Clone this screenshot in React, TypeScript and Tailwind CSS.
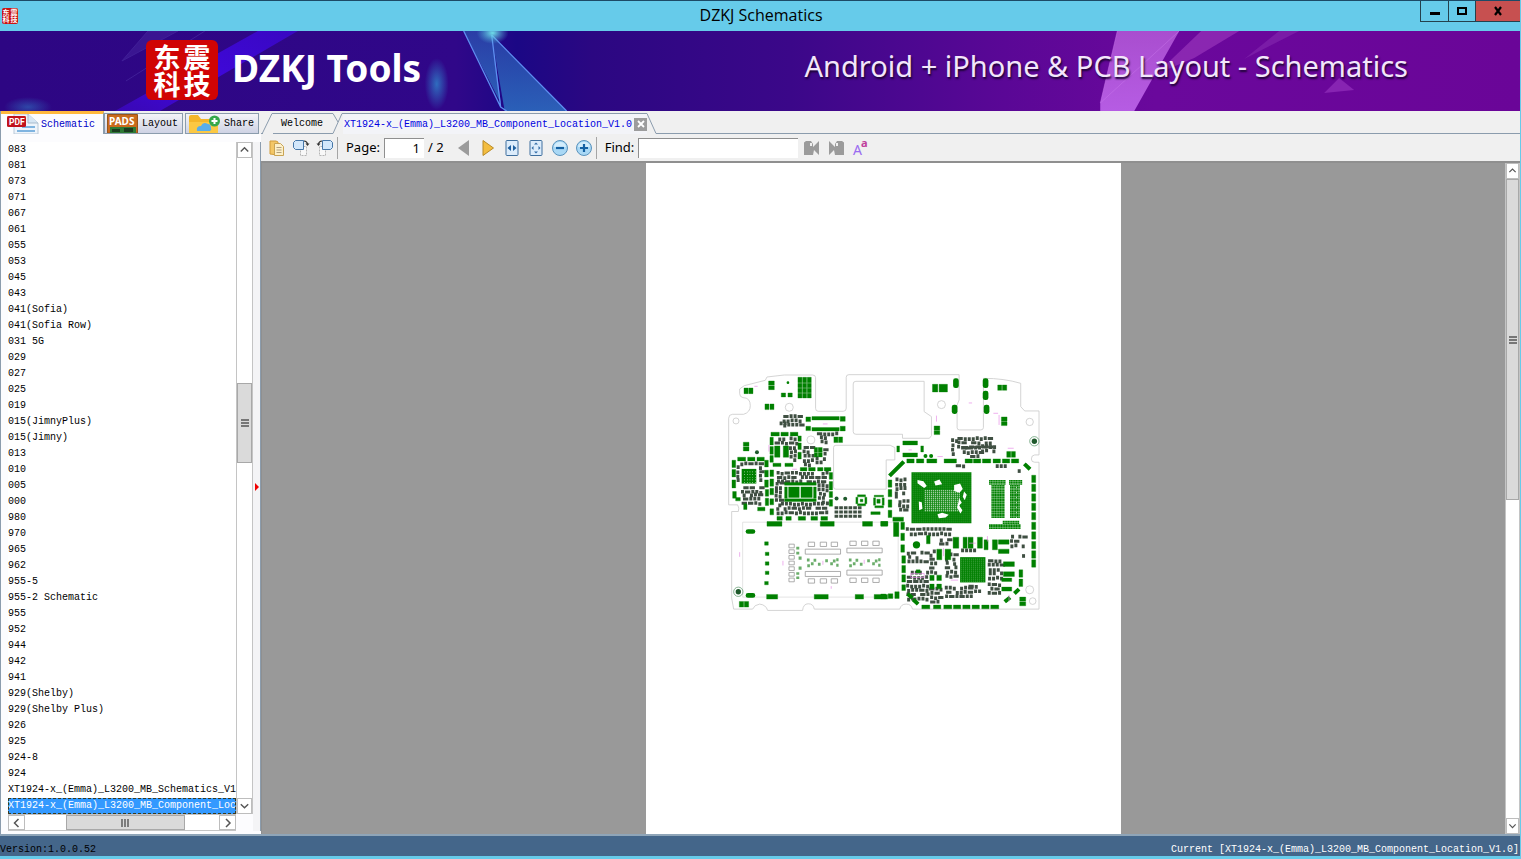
import { useState } from 'react';

type Orientation = 'vertical' | 'horizontal';
type Box = [number, number, number, number];

interface ScrollbarProps {
  orientation: Orientation;
  before: number;
  thumb: number;
  after: number;
  className?: string;
}

const files = [
  '083', '081', '073', '071', '067', '061', '055', '053', '045', '043',
  '041(Sofia)', '041(Sofia Row)', '031 5G', '029', '027', '025', '019',
  '015(JimnyPlus)', '015(Jimny)', '013', '010', '005', '000', '980', '970',
  '965', '962', '955-5', '955-2 Schematic', '955', '952', '944', '942', '941',
  '929(Shelby)', '929(Shelby Plus)', '926', '925', '924-8', '924',
  'XT1924-x_(Emma)_L3200_MB_Schematics_V1.0',
  'XT1924-x_(Emma)_L3200_MB_Component_Location_V1.0',
];

const chevrons = {
  up: 'M3 8.5 7 4.5l4 4',
  down: 'M3 5 7 9l4-4',
  left: 'M8.5 3 4.5 7l4 4',
  right: 'M5 3l4 4-4 4',
};

const Chevron = ({ dir }: { dir: keyof typeof chevrons }) => (
  <svg className="h-[14px] w-[14px]" viewBox="0 0 14 14" fill="none" stroke="#555" strokeWidth="1.5">
    <path d={chevrons[dir]} />
  </svg>
);

function Scrollbar({ orientation, before, thumb, after, className = '' }: ScrollbarProps) {
  const vertical = orientation === 'vertical';
  const button = 'flex shrink-0 items-center justify-center border border-[#bdbdbd] bg-white';
  const size = vertical ? 'h-4 w-full' : 'h-full w-[17px]';
  return (
    <div className={`flex ${vertical ? 'flex-col border-x' : 'border-y'} border-[#c4c4c4] bg-white ${className}`}>
      <button type="button" aria-label={vertical ? 'Scroll up' : 'Scroll left'} className={`${button} ${size}`}>
        <Chevron dir={vertical ? 'up' : 'left'} />
      </button>
      <div style={{ flex: `${before} 0 0px` }} />
      <div
        className="flex items-center justify-center border border-[#a8a8a8] bg-[#dadada]"
        style={{ flex: `${thumb} 0 0px` }}
      >
        <svg className={`h-2 w-2 ${vertical ? '' : 'rotate-90'}`} viewBox="0 0 8 8" stroke="#555" strokeWidth="1.4">
          <path d="M0 1h8M0 4h8M0 7h8" />
        </svg>
      </div>
      <div style={{ flex: `${after} 0 0px` }} />
      <button type="button" aria-label={vertical ? 'Scroll down' : 'Scroll right'} className={`${button} ${size}`}>
        <Chevron dir={vertical ? 'down' : 'right'} />
      </button>
    </div>
  );
}

// ---- board drawing ----

const boxPath = (boxes: Box[]) => boxes.map(([x, y, w, h]) => `M${x} ${y}h${w}v${h}h${-w}z`).join('');

// small passives packed into an area, some of them left out or turned
const cluster = ([x, y, w, h]: Box, seed: number) => {
  let s = seed * 7919 + 13;
  const rand = () => {
    s = (s * 1103515245 + 12345) % 2147483648;
    return s / 2147483648;
  };
  const out: Box[] = [];
  for (let cy = y; cy < y + h - 6; cy += 13) {
    let cx = x + Math.floor(rand() * 5);
    while (cx < x + w - 6) {
      const r = rand();
      if (r < 0.2) {
        out.push([cx, cy, 16, 9]);
        cx += 19;
      } else if (r < 0.9) {
        out.push([cx, cy + (r < 0.5 ? 1 : -2), 9, 11]);
        cx += 12;
      } else {
        cx += 10;
      }
    }
  }
  return boxPath(out);
};

const padsA: Box[] = [
  [69, 69, 12, 17], [83, 69, 13, 17], [143, 48, 17, 12], [143, 62, 17, 12],
  [231, 37, 12, 16], [245, 37, 12, 16], [259, 37, 12, 16], [231, 55, 12, 13], [245, 55, 12, 13], [259, 55, 12, 13],
  [231, 70, 12, 13], [245, 70, 12, 13], [259, 70, 12, 13], [231, 85, 12, 14], [245, 85, 12, 14], [259, 85, 12, 14],
  [181, 84, 13, 12], [201, 84, 13, 12], [132, 117, 12, 17], [147, 117, 12, 17],
  [255, 156, 14, 14], [273, 155, 82, 10], [358, 155, 15, 14], [255, 184, 14, 13], [273, 188, 82, 10], [358, 184, 15, 14],
  [339, 216, 12, 17], [353, 216, 12, 17], [67, 232, 17, 12], [67, 246, 17, 12],
  [150, 202, 25, 11], [180, 202, 22, 11], [208, 202, 23, 11],
  [147, 217, 10, 23], [147, 245, 10, 23], [147, 272, 10, 20], [231, 213, 10, 16], [231, 234, 10, 20], [231, 262, 10, 20],
  [161, 243, 16, 34], [187, 243, 16, 34],
  [280, 248, 10, 13], [292, 248, 12, 13], [280, 263, 10, 13], [292, 263, 12, 13],
  [50, 277, 24, 11], [80, 277, 22, 11], [108, 277, 22, 11],
  [33, 286, 11, 22], [33, 314, 11, 22], [33, 345, 11, 24], [35, 380, 11, 20], [44, 398, 14, 10],
  [131, 286, 11, 20], [131, 316, 11, 20], [131, 345, 11, 22], [133, 374, 10, 20], [133, 400, 10, 22],
  [147, 315, 11, 20], [147, 342, 11, 22], [147, 370, 11, 20], [147, 402, 11, 18], [147, 432, 11, 18],
  [156, 295, 24, 10], [192, 295, 24, 10], [238, 308, 20, 10], [263, 308, 20, 10], [290, 308, 16, 10], [310, 308, 20, 10],
  [325, 323, 10, 20], [325, 350, 10, 25], [325, 380, 10, 18], [325, 404, 10, 20],
  [191, 353, 95, 8], [191, 366, 8, 34], [278, 366, 8, 34], [191, 402, 95, 8], [203, 366, 32, 32], [240, 366, 34, 32],
];

const padsC: Box[] = [
  [68, 42, 10, 17], [110, 52, 22, 11], [138, 95, 45, 14], [298, 95, 42, 14], [425, 95, 30, 14], [480, 95, 20, 14],
  [131, 156, 11, 10], [133, 187, 11, 10], [133, 216, 11, 10], [133, 244, 11, 10], [131, 275, 11, 10],
  [55, 335, 13, 17], [70, 335, 13, 17], [137, 314, 33, 14], [280, 314, 42, 14], [403, 314, 25, 14], [460, 314, 40, 14],
  [168, 80, 16, 11], [195, 80, 16, 11], [232, 80, 22, 11], [270, 80, 20, 11], [300, 80, 20, 11],
  [410, 15, 24, 6], [405, 22, 6, 20], [432, 22, 6, 20], [410, 42, 24, 6], [418, 28, 8, 8],
  [460, 16, 28, 5], [458, 24, 6, 22], [484, 24, 6, 22], [462, 48, 26, 6], [450, 66, 28, 8], [468, 28, 10, 12],
];

const padsB: Box[] = [
  [155, 58, 16, 23], [175, 58, 25, 23], [351, 60, 12, 16], [365, 60, 13, 16], [362, 156, 17, 12], [362, 170, 17, 12],
  [160, 183, 17, 12], [160, 197, 17, 12], [66, 228, 44, 12], [66, 264, 44, 12], [48, 243, 8, 18], [120, 243, 8, 18],
  [378, 260, 12, 17], [392, 260, 12, 17], [78, 282, 22, 12], [107, 282, 22, 12], [138, 282, 30, 12], [190, 282, 37, 12],
  [253, 282, 22, 12], [278, 282, 22, 12], [305, 282, 25, 12], [337, 282, 22, 12], [365, 282, 22, 12], [392, 282, 22, 12],
  [453, 331, 12, 22], [453, 358, 12, 22], [453, 387, 12, 22], [453, 415, 12, 22], [453, 443, 12, 22], [453, 472, 12, 22],
  [453, 501, 12, 22], [453, 530, 12, 22], [453, 558, 12, 22], [453, 585, 12, 22],
  [22, 345, 11, 22], [22, 374, 11, 22], [22, 405, 11, 22], [22, 436, 11, 22],
];

const padsD: Box[] = [
  [60, 97, 11, 22], [60, 130, 11, 22], [60, 165, 11, 22], [63, 198, 11, 22], [63, 227, 11, 22], [63, 255, 11, 22],
  [63, 285, 11, 17], [36, 82, 32, 12], [38, 97, 16, 43], [0, 95, 21, 13], [0, 313, 15, 14], [22, 312, 14, 14], [42, 306, 13, 20],
  [137, 137, 11, 25], [217, 142, 17, 33], [247, 142, 12, 33], [262, 142, 15, 33], [290, 142, 15, 33], [310, 150, 12, 30],
  [335, 150, 15, 30], [353, 150, 32, 13], [353, 178, 32, 13], [168, 178, 15, 32], [193, 178, 17, 32],
  [368, 216, 33, 14], [368, 246, 33, 14], [363, 265, 30, 10], [363, 292, 30, 12], [147, 256, 13, 16], [168, 256, 14, 16],
  [147, 283, 13, 14], [168, 283, 14, 14],
  [106, 240, 12, 12], [415, 240, 11, 22], [415, 268, 11, 22], [417, 322, 18, 12], [417, 336, 18, 12],
  [123, 346, 24, 11], [158, 346, 22, 11], [189, 346, 24, 11], [218, 346, 22, 11], [246, 346, 22, 11], [274, 346, 22, 11],
  [303, 346, 22, 11], [330, 346, 24, 11],
];

// coordinates already in board space
const clusters: Box[] = [
  [158, 217, 72, 30], [203, 243, 26, 48], [185, 150, 62, 45], [172, 172, 30, 16], [288, 202, 68, 14], [295, 213, 28, 22],
  [245, 243, 38, 60], [284, 276, 38, 30], [306, 250, 16, 30], [165, 320, 160, 34], [160, 350, 28, 72], [290, 357, 32, 66],
  [56, 292, 74, 12], [44, 303, 14, 58], [114, 303, 14, 58], [56, 364, 68, 24], [62, 385, 60, 40], [166, 413, 155, 45],
  [690, 222, 20, 58], [708, 216, 112, 34], [725, 245, 60, 20], [748, 270, 34, 12], [780, 240, 50, 20], [702, 298, 30, 18], [520, 340, 40, 70],
  [532, 405, 32, 36], [823, 300, 38, 12], [887, 312, 20, 14], [555, 489, 142, 22], [655, 520, 32, 32], [868, 512, 52, 38],
  [558, 560, 62, 45], [625, 553, 22, 72], [672, 565, 40, 82], [556, 620, 74, 96], [672, 665, 90, 44], [800, 583, 48, 70],
  [798, 655, 42, 40], [625, 668, 38, 50], [720, 553, 52, 16], [740, 660, 40, 20], [900, 570, 22, 18],
];

const meshDots = (x: number, y: number, cols: number, rows: number, pitch: number, size: number) => {
  const out: Box[] = [];
  for (let r = 0; r < rows; r++) for (let c = 0; c < cols; c++) out.push([x + c * pitch, y + r * pitch, size, size]);
  return boxPath(out);
};

const passiveGrid: Box[] = [0, 1, 2].flatMap((r) =>
  [0, 1, 2, 3, 4, 5].map((c): Box => [341 + c * 14, 424 + r * 13, 11, 9]),
);

const outlineBoxes: Box[] = [
  ...[0, 1, 2, 3, 4, 5, 6].map((i): Box => [204, 538 + i * 17, 16, 11]),
  ...[262, 298, 331].flatMap((x): Box[] => [[x, 532, 19, 13], [x, 642, 19, 13]]),
  ...[387, 422, 456].flatMap((x): Box[] => [[x, 529, 19, 13], [x, 640, 19, 13]]),
  [253, 553, 106, 15], [253, 620, 106, 15], [378, 550, 106, 14], [378, 616, 106, 15],
];

const tinyParts: Box[] = [
  [226, 546, 9, 8], [226, 561, 9, 8], [233, 575, 9, 10], [233, 605, 9, 10], [226, 622, 9, 8], [226, 635, 9, 8],
  ...[258, 384].flatMap((x): Box[] => [
    [x, 581, 8, 9], [x + 1, 598, 8, 9], [x + 12, 592, 8, 9], [x + 20, 582, 8, 9], [x + 33, 594, 8, 9],
    [x + 55, 583, 8, 9], [x + 70, 592, 8, 9], [x + 78, 584, 8, 9], [x + 88, 580, 7, 9], [x + 88, 597, 7, 9],
  ]),
];

const Board = () => (
  <svg className="w-[70%]" viewBox="0 0 990 765" role="img" aria-label="Component location drawing">
    <g fill="none" stroke="#c9c9c9" strokeWidth="2.4">
      <path d="M23 160Q23 148 35 148H68Q88 142 88 122Q88 98 66 98Q56 96 56 86V72L70 62 133 46 138 36 190 30H275Q284 30 284 38V130Q284 139 292 139H367Q376 139 376 130V37Q376 29 384 29H715V105L709 120V188Q709 195 716 195H780Q788 195 788 188V40Q850 40 900 55V125L912 138H955V270H942Q932 271 932 282Q932 292 942 292H955V733H575Q572 718 556 718 540 718 537 733H280Q278 717 262 717 247 717 245 737H140Q135 720 116 718 100 720 95 733H38L32 700V440H52Q56 430 50 420H23z" />
      <path d="M405 49H610V140L632 155V212L626 220H545V208H405Q397 208 397 200V57Q397 49 405 49z" />
      <path d="M345 241H508L522 248V285H496V373H345Q338 373 338 366V248Q338 241 345 241z" />
      <path d="M65 472H532V697H65z" stroke="#ddd" />
      <circle cx="45" cy="168" r="9" />
      <circle cx="205" cy="127" r="12" />
      <circle cx="270" cy="225" r="12" />
      <circle cx="662" cy="119" r="12" />
      <circle cx="927" cy="171" r="11" />
      <circle cx="927" cy="675" r="12" />
      <circle cx="936" cy="709" r="10" />
      <path d={boxPath(outlineBoxes)} stroke="#999" />
    </g>
    <g fill="#3f4f42">
      {clusters.map((c, i) => (
        <path key={i} d={cluster(c, i + 1)} />
      ))}
      <path d={boxPath(passiveGrid)} />
    </g>
    <g fill="#008000">
      <g stroke="#008000">
        <path d={boxPath(padsA)} />
        <path d={boxPath(padsC)} transform="translate(0 375)" />
        <path d={boxPath(padsB)} transform="translate(480 0)" />
        <path d={boxPath(padsD)} transform="translate(480 375)" />
      </g>
      <path d="M62 312h44v44H62z" />
      <circle cx="201" cy="53" r="4" />
      <circle cx="614" cy="273" r="6" />
      <circle cx="631" cy="273" r="6" />
      <circle cx="587" cy="540" r="11" />
      <rect x="74" y="493" width="29" height="14" rx="7" />
      <rect x="74" y="685" width="29" height="14" rx="7" />
      <rect x="697" y="40" width="17" height="29" rx="7" />
      <rect x="786" y="40" width="17" height="29" rx="7" />
      <rect x="786" y="77" width="17" height="28" rx="7" />
      <rect x="693" y="119" width="17" height="28" rx="7" />
      <rect x="789" y="119" width="17" height="28" rx="7" />
      <path d="M572 322h180v153H572z" />
      <path d="M718 577h76v76h-76z" />
      <path d={meshDots(812, 360, 8, 20, 5, 4.4)} />
      <path d={meshDots(868, 360, 6, 20, 5, 4.4)} />
      <path d={meshDots(805, 345, 10, 3, 5, 4.4)} />
      <path d={meshDots(865, 345, 8, 3, 5, 4.4)} />
      <path d={meshDots(846, 468, 10, 2, 5, 4.4)} />
      <path d={meshDots(805, 478, 19, 3, 5, 4.4)} />
    </g>
    <g stroke="#008000" strokeWidth="12">
      <path d="M506 333 549 290M911 297 928 313M560 687 575 700M577 704 592 718M881 686 895 673M852 711 868 698" />
    </g>
    <g fill="#fff">
      <path d={meshDots(576, 326, 30, 25, 6, 2)} opacity=".45" />
      <path d={meshDots(612, 376, 18, 11, 6, 3)} />
      <path d={meshDots(70, 320, 5, 5, 8, 2)} />
      <path d={meshDots(722, 582, 12, 12, 6, 2)} opacity=".6" />
      <path d="M590 345l18 4 10 14-8 6-20-14zM640 350l16-6 8 14-20 4zM700 360l18-4 8 16-10 12-16-6zM594 410l9 2 2 20-10 4zM715 400l8 14-8 8 10 14-6 10-10-18 4-16zM730 380l8 10-6 16-6-10zM650 448l14-4 20 6-10 8-20 2z" />
    </g>
    <g fill="#2c8a2c">
      <path d={boxPath(tinyParts)} opacity=".7" />
    </g>
    <g fill="#1f5a2c">
      <circle cx="52" cy="681" r="8" />
      <circle cx="941" cy="229" r="8" />
      <circle cx="108" cy="262" r="6" />
      <circle cx="347" cy="401" r="6" />
      <circle cx="373" cy="402" r="6" />
    </g>
    <g fill="none" stroke="#4d8f5f" strokeWidth="2">
      <circle cx="52" cy="681" r="14" />
      <circle cx="941" cy="229" r="14" />
    </g>
    <g stroke="#e58ae5" strokeWidth="2" fill="none">
      <path d="M56 562v14M186 588v14M306 588v12M430 585v12M331 664v8M306 177h14M744 114h10M647 152v18M818 145h14M650 275h16M835 150v30M861 250h18M563 255h10M100 64h10M144 240v20M214 313h14M570 638h40v-12h-40zM668 550v24M745 535h20M800 514v16M690 646h22M865 690v20" />
    </g>
  </svg>
);

// ---- chrome ----

const Seal = ({ small = false }: { small?: boolean }) => (
  <span
    className={`grid shrink-0 grid-cols-2 content-center justify-items-center font-['Noto_Sans_CJK_SC',sans-serif] font-bold text-white ${
      small
        ? 'h-4 w-4 rounded-xs bg-[#c91414] text-[7px] leading-[7px]'
        : 'h-[60px] w-[72px] rounded-md bg-[#d00404] px-1.5 text-[27px] leading-[27px]'
    }`}
  >
    <span>东</span>
    <span>震</span>
    <span>科</span>
    <span>技</span>
  </span>
);

const BannerArt = () => (
  <svg className="absolute inset-0 h-full w-full" viewBox="0 0 1521 80" preserveAspectRatio="none">
    <defs>
      <linearGradient id="sky" x1="0" x2="1">
        <stop offset="0" stopColor="#2d0683" />
        <stop offset=".3" stopColor="#300789" />
        <stop offset=".34" stopColor="#1b0785" />
        <stop offset=".39" stopColor="#2b0782" />
        <stop offset=".52" stopColor="#3b0789" />
        <stop offset=".66" stopColor="#5a0796" />
        <stop offset=".76" stopColor="#6a089c" />
        <stop offset="1" stopColor="#6a0598" />
      </linearGradient>
      <linearGradient id="shard" x1="0" y1="0" x2="0" y2="1">
        <stop offset="0" stopColor="#2b4fb0" />
        <stop offset="1" stopColor="#2f7dc9" />
      </linearGradient>
      <linearGradient id="pink" x1="0" y1="0" x2="0" y2="1">
        <stop offset="0" stopColor="#b45ad8" />
        <stop offset="1" stopColor="#c46bf0" />
      </linearGradient>
      <linearGradient id="beam" x1="1" y1="0" x2="0" y2="1">
        <stop offset="0" stopColor="#3a08c8" />
        <stop offset=".6" stopColor="#4208e6" />
        <stop offset="1" stopColor="#3a08b8" />
      </linearGradient>
      <radialGradient id="glow">
        <stop offset="0" stopColor="#2f86cc" />
        <stop offset="1" stopColor="#2f86cc" stopOpacity="0" />
      </radialGradient>
      <radialGradient id="spark">
        <stop offset="0" stopColor="#6fe0ea" />
        <stop offset="1" stopColor="#4fb0d8" stopOpacity="0" />
      </radialGradient>
    </defs>
    <path d="M0 0h1521v80H0z" fill="url(#sky)" />
    <path d="M258 0h40L160 80h-45z" fill="url(#beam)" opacity=".9" />
    <path d="M148 0h30L122 30zM205 0 126 50" fill="#43209a" stroke="#4c2fa5" opacity=".6" />
    <ellipse cx="28" cy="76" rx="24" ry="10" fill="url(#glow)" opacity=".5" />
    <ellipse cx="437" cy="53" rx="12" ry="26" fill="url(#glow)" opacity=".8" />
    <path d="M464 0h28l9 72z" fill="url(#shard)" opacity=".75" />
    <path d="M492 5 567 80h-62z" fill="url(#shard)" opacity=".75" />
    <path d="M464 0l37 76 6 4M492 4l9 72M492 4l75 76" fill="none" stroke="#5d8ff0" strokeWidth="1.3" />
    <ellipse cx="493" cy="2" rx="16" ry="11" fill="url(#spark)" />
    <path d="M1118 0h62l-45 80h-34v-8z" fill="url(#pink)" opacity=".85" />
    <path d="M1202 0h38l-45 27-38 16z" fill="#a03cc0" opacity=".6" />
    <path d="M1280 0h20l-55 28z" fill="#8a2fb4" opacity=".5" />
    <path d="M1118 0l-17 72 79-72" fill="none" stroke="#cf7df0" opacity=".4" />
    <path d="M1325 62l15-15 15 12z" fill="#8f2cb8" opacity=".8" />
  </svg>
);

const PdfIcon = () => (
  <svg className="h-5 w-8" viewBox="0 0 32 20">
    <path d="M7 0h14l10 9v11H7z" fill="#eef4fb" stroke="#b8c8d8" />
    <path d="M21 0v9h10" fill="#d6e6f4" stroke="#a9bccd" />
    <path d="M15 13h13M10 17h18" stroke="#7fb4e0" strokeWidth="2" />
    <rect y="2" width="19" height="11" rx="1.5" fill="#c1121b" />
    <text x="2" y="11" fontSize="8.5" fontWeight="bold" fill="#fff" fontFamily="Roboto, sans-serif">PDF</text>
  </svg>
);

const PadsIcon = () => (
  <svg className="h-[19px] w-[31px]" viewBox="0 0 31 19">
    <path d="M.5.5h30V19H.5z" fill="#c96a1c" stroke="#99521a" />
    <path d="M3 13h26v6H3z" fill="#2e7a35" />
    <path d="M5 15h8v3H5zM17 14h9v4h-9z" fill="#1b3c20" />
    <text x="2" y="10.500" fontSize="10" fontWeight="bold" fill="#fff" fontFamily="Noto Sans, sans-serif">PADS</text>
  </svg>
);

const ShareIcon = () => (
  <svg className="h-[19px] w-8" viewBox="0 0 32 19">
    <path d="M1 3q0-2 2-2h7l3 4h15q2 0 2 2v12H1z" fill="#f4b62a" />
    <path d="M1 8h29v11H1z" fill="#fbc843" />
    <path d="M9 17q-1-5 4-5 2-5 7-2 3 0 3 4 1 2-1 3z" fill="#58aeea" />
    <circle cx="26.500" cy="7" r="5.500" fill="#35a84a" />
    <path d="M26.500 4v6M23.500 7h6" stroke="#fff" strokeWidth="2" />
  </svg>
);

const sideTabs = [
  { label: 'Schematic', Icon: PdfIcon },
  { label: 'Layout', Icon: PadsIcon },
  { label: 'Share', Icon: ShareIcon },
];

const iconClass = 'h-[18px] w-[18px]';

const PasteIcon = () => (
  <svg className={iconClass} viewBox="0 0 18 18">
    <path d="M2 2h6l2 1v13l-8-1z" fill="#f3c766" stroke="#d19c3a" />
    <path d="M6.500 4.500h6l3 3v9h-9z" fill="#fdf0c8" stroke="#c9a455" />
    <path d="M8.500 8.500h5M8.500 11h5M8.500 13.500h5" stroke="#b0a080" />
  </svg>
);

const RotateIcon = ({ flip = false }: { flip?: boolean }) => (
  <svg className={`h-[18px] w-[18px] ${flip ? '-scale-x-100' : ''}`} viewBox="0 0 18 18">
    <path d="M8.500 7.500h6v9h-6z" fill="#f8f8f8" stroke="#b5b5b5" strokeDasharray="2 1" />
    <path d="M3.500 1.500h8v9h-8l-2-2v-5z" fill="#d2e7fb" stroke="#4677a8" />
    <path d="M12 2q3 0 3.500 3" fill="none" stroke="#333" strokeWidth="1.200" />
    <path d="M13.500 4.500h4l-2 2.500z" fill="#333" />
  </svg>
);

const FitIcon = ({ page = false }: { page?: boolean }) => (
  <svg className={iconClass} viewBox="0 0 18 18">
    <rect x="3" y="1.500" width="12" height="15" rx="1" fill="#dcecfb" stroke="#3f6f9e" />
    {page ? (
      <path d="M9 3.500l2 2H7zM9 14.500l2-2H7zM4.500 9l2-2v4zM13.500 9l-2-2v4z" fill="#2f6aa5" />
    ) : (
      <path d="M4.500 9 8 6v6zM13.500 9 10 6v6z" fill="#1e5f9f" />
    )}
  </svg>
);

const ZoomIcon = ({ plus = false }: { plus?: boolean }) => (
  <svg className={iconClass} viewBox="0 0 18 18">
    <circle cx="9" cy="9" r="7.500" fill="#a9d8f5" stroke="#5a93bd" />
    <path d="M3 8a6 5 0 0112 0z" fill="#d3edfc" />
    <path d={plus ? 'M5 9h8M9 5v8' : 'M5 9h8'} stroke="#1461a3" strokeWidth="2.200" />
  </svg>
);

const FindIcon = ({ next = false }: { next?: boolean }) => (
  <svg className={`h-[18px] w-[18px] ${next ? '-scale-x-100' : ''}`} viewBox="0 0 18 18" fill="#9b9b9b">
    <path d="M1 3.500 3 2h5l2 3v3l6-6v14l-5-5-1 5H1z" />
    <path d="M7 4h2v3H7z" fill="#f0f0f0" />
  </svg>
);

const ToolButton = ({ label, children }: { label: string; children: React.ReactNode }) => (
  <button type="button" aria-label={label} className="flex h-6 w-6 shrink-0 items-center justify-center">
    {children}
  </button>
);

const Separator = () => <span className="h-[22px] w-px shrink-0 bg-[#a5a5a5]" />;

function Sidebar() {
  const [tab, setTab] = useState('Schematic');
  const [selected, setSelected] = useState(files[files.length - 1]);

  return (
    <aside className="flex w-[261px] shrink-0 flex-col border-l border-[#8b9cad] bg-[#fcfcfe]">
      <div role="tablist" className="flex h-[23px] shrink-0 items-stretch bg-[#f0f0f0]">
        {sideTabs.map(({ label, Icon }) => (
          <button
            key={label}
            type="button"
            role="tab"
            aria-selected={tab === label}
            onClick={() => setTab(label)}
            className={`flex items-center overflow-hidden text-[10px] ${
              tab === label
                ? 'gap-0.5 border-t-3 border-r border-t-[#ffb83c] border-r-[#8b9cad] bg-[#fcfcfe] pr-2 pl-1.5 text-[#0000c8]'
                : 'mt-0.5 mr-0.5 gap-1 border border-[#8b9cad] bg-linear-to-b from-[#f4f4f8] to-[#ced2e4] pr-1 pl-0.5'
            }`}
          >
            <Icon />
            {label}
          </button>
        ))}
      </div>
      <div className="flex min-h-0 flex-1 pt-2 pb-[3px]">
        <div className="flex min-h-0 w-[252px] shrink-0 flex-col pl-[7px]">
          <div className="flex min-h-0 flex-1">
            <ul className="min-w-0 flex-1 overflow-hidden bg-white">
              {files.map((name) => (
                <li key={name}>
                  <button
                    type="button"
                    onClick={() => setSelected(name)}
                    className={`block h-4 w-full overflow-hidden text-left text-[10px] leading-4 whitespace-nowrap ${
                      selected === name
                        ? 'bg-[#3399ff] text-white outline outline-dashed -outline-offset-1 outline-[#3b3b1c]'
                        : ''
                    }`}
                  >
                    {name}
                  </button>
                </li>
              ))}
            </ul>
            <Scrollbar orientation="vertical" before={226} thumb={78} after={336} className="w-[17px] shrink-0" />
          </div>
          <Scrollbar orientation="horizontal" before={42} thumb={118} after={35} className="mr-[17px] h-[17px] shrink-0" />
        </div>
        <div className="flex flex-1 items-center justify-center border-r border-[#8b9cad] bg-[#f4f4f6]">
          <svg className="h-2 w-1" viewBox="0 0 4 8" fill="#f00000">
            <path d="M0 0l4 4-4 4z" />
          </svg>
        </div>
      </div>
    </aside>
  );
}

function DocumentTabs() {
  return (
    <div className="flex h-[23px] shrink-0 items-end bg-[#f0f0f0] pt-0.5 text-[10px]">
      <svg className="h-[21px] w-3 shrink-0" viewBox="0 0 12 21" fill="none" stroke="#8b9cad">
        <path d="M1 21 11 .5H12M0 20.500h2" />
      </svg>
      <button type="button" className="h-[21px] border-y border-[#8b9cad] px-2">Welcome</button>
      <svg className="h-[21px] w-3 shrink-0" viewBox="0 0 12 21" fill="none" stroke="#8b9cad">
        <path d="M0 .5h2L7 9M0 20.500h2L11 .5h1" />
      </svg>
      <div className="flex h-[21px] items-center gap-0.5 border-t border-[#8b9cad] bg-[#f3f4f8] pl-px">
        <button type="button" className="text-[#0000e0]">XT1924-x_(Emma)_L3200_MB_Component_Location_V1.0</button>
        <button type="button" aria-label="Close tab" className="flex h-[13px] w-[13px] items-center justify-center bg-[#9c9c9c]">
          <svg className="h-2 w-2" viewBox="0 0 8 8" stroke="#fff" strokeWidth="1.800">
            <path d="M1 1l6 6M7 1 1 7" />
          </svg>
        </button>
      </div>
      <svg className="h-[21px] w-[10px] shrink-0" viewBox="0 0 10 21" fill="none" stroke="#8b9cad">
        <path d="M0 .5 9 20.500h1" />
      </svg>
      <span className="h-px flex-1 bg-[#8b9cad]" />
    </div>
  );
}

function Toolbar() {
  return (
    <div className="flex h-[27px] shrink-0 items-center bg-[#f0f0f0] pl-1 font-['Noto_Sans',sans-serif] text-[13px]">
      <ToolButton label="Paste"><PasteIcon /></ToolButton>
      <ToolButton label="Rotate right"><RotateIcon /></ToolButton>
      <ToolButton label="Rotate left"><RotateIcon flip /></ToolButton>
      <Separator />
      <label htmlFor="page" className="mr-1 ml-2">Page:</label>
      <input id="page" defaultValue="1" className="h-5 w-10 border-t border-l border-[#8f8f8f] bg-white pr-1 text-right" />
      <span className="mr-2 ml-1">/ 2</span>
      <ToolButton label="Previous page">
        <svg className="h-4 w-3" viewBox="0 0 12 16" fill="#9b9b9b"><path d="M11 0v16L0 8z" /></svg>
      </ToolButton>
      <ToolButton label="Next page">
        <svg className="h-4 w-3" viewBox="0 0 12 16"><path d="M1 .5v15L11.500 8z" fill="#f3bd40" stroke="#b98a26" /></svg>
      </ToolButton>
      <ToolButton label="Fit width"><FitIcon /></ToolButton>
      <ToolButton label="Fit page"><FitIcon page /></ToolButton>
      <ToolButton label="Zoom out"><ZoomIcon /></ToolButton>
      <ToolButton label="Zoom in"><ZoomIcon plus /></ToolButton>
      <Separator />
      <label htmlFor="find" className="mr-1 ml-2">Find:</label>
      <input id="find" className="mr-0.5 h-5 w-40 border-t border-l border-[#8f8f8f] bg-white px-1" />
      <ToolButton label="Find previous"><FindIcon /></ToolButton>
      <ToolButton label="Find next"><FindIcon next /></ToolButton>
      <ToolButton label="Match case">
        <svg className="h-[18px] w-[18px] overflow-visible" viewBox="0 0 18 18">
          <text x="2" y="16" fontSize="14" fill="#9a6cf0" fontFamily="Noto Sans, sans-serif">A</text>
          <text x="10" y="8" fontSize="11" fontWeight="bold" fill="#c0409c" fontFamily="Noto Sans, sans-serif">a</text>
        </svg>
      </ToolButton>
    </div>
  );
}

export default function App() {
  return (
    <div className="flex h-screen flex-col overflow-hidden border-r border-b-3 border-[#66cbea] bg-[#f0f0f0] font-['Liberation_Mono','Noto_Sans_CJK_SC',monospace] text-black">
      <header className="flex h-[31px] shrink-0 items-start border-t border-t-[#1d4a66] bg-[#66cbea]">
        <div className="flex h-full flex-1 items-center pl-0.5"><Seal small /></div>
        <h1 className="font-['Open_Sans',sans-serif] text-[16px] leading-[29px]">DZKJ Schematics</h1>
        <div className="flex flex-1 justify-end">
          <button type="button" aria-label="Minimize" className="flex h-[21px] w-[29px] items-center justify-center border border-t-0 border-[#24414d]">
            <svg className="h-3 w-3" viewBox="0 0 12 12"><path d="M1 7h10v3H1z" /></svg>
          </button>
          <button type="button" aria-label="Maximize" className="flex h-[21px] w-[26px] items-center justify-center border-b border-[#24414d]">
            <svg className="h-3 w-3" viewBox="0 0 12 12" fill="none" stroke="#000" strokeWidth="2"><path d="M2 3h8v6H2z" /></svg>
          </button>
          <button type="button" aria-label="Close" className="flex h-[21px] w-[45px] items-center justify-center border-b border-l border-[#24414d] bg-[#c75050]">
            <svg className="h-3 w-3" viewBox="0 0 12 12" stroke="#000" strokeWidth="2.200"><path d="M3 2l6 8M9 2l-6 8" /></svg>
          </button>
        </div>
      </header>

      <div className="relative flex h-20 shrink-0 items-center justify-between overflow-hidden pr-28 pb-0.5 pl-[146px] text-white">
        <BannerArt />
        <div className="relative flex items-center gap-3.5">
          <Seal />
          <span className="pb-1 font-['Noto_Sans',sans-serif] text-[37px] leading-[54px] font-bold whitespace-nowrap">DZKJ Tools</span>
        </div>
        <span className="relative pb-2 font-['Noto_Sans',sans-serif] text-[29px] whitespace-nowrap text-[#f3e6fb] text-shadow-[1px_2px_2px_#1c0433]">
          Android + iPhone &amp; PCB Layout - Schematics
        </span>
      </div>

      <div className="flex min-h-0 flex-1">
        <Sidebar />
        <main className="flex min-w-0 flex-1 flex-col">
          <DocumentTabs />
          <Toolbar />
          <div className="flex min-h-0 flex-1 border-t-2 border-l border-[#8f8f8f] bg-[#999]">
            <div className="flex flex-1 justify-center">
              <div className="flex w-[475px] flex-col items-center justify-center bg-white pb-3 pl-1">
                <Board />
              </div>
            </div>
            <Scrollbar orientation="vertical" before={0} thumb={321} after={320} className="w-[15px] shrink-0" />
          </div>
        </main>
      </div>

      <footer className="flex h-[22px] shrink-0 items-end justify-between border-t-2 border-[#8fa5b8] bg-[#44668a] text-[10px]">
        <span className="leading-3">Version:1.0.0.52</span>
        <span className="pr-px leading-3 text-white">Current [XT1924-x_(Emma)_L3200_MB_Component_Location_V1.0]</span>
      </footer>
    </div>
  );
}
